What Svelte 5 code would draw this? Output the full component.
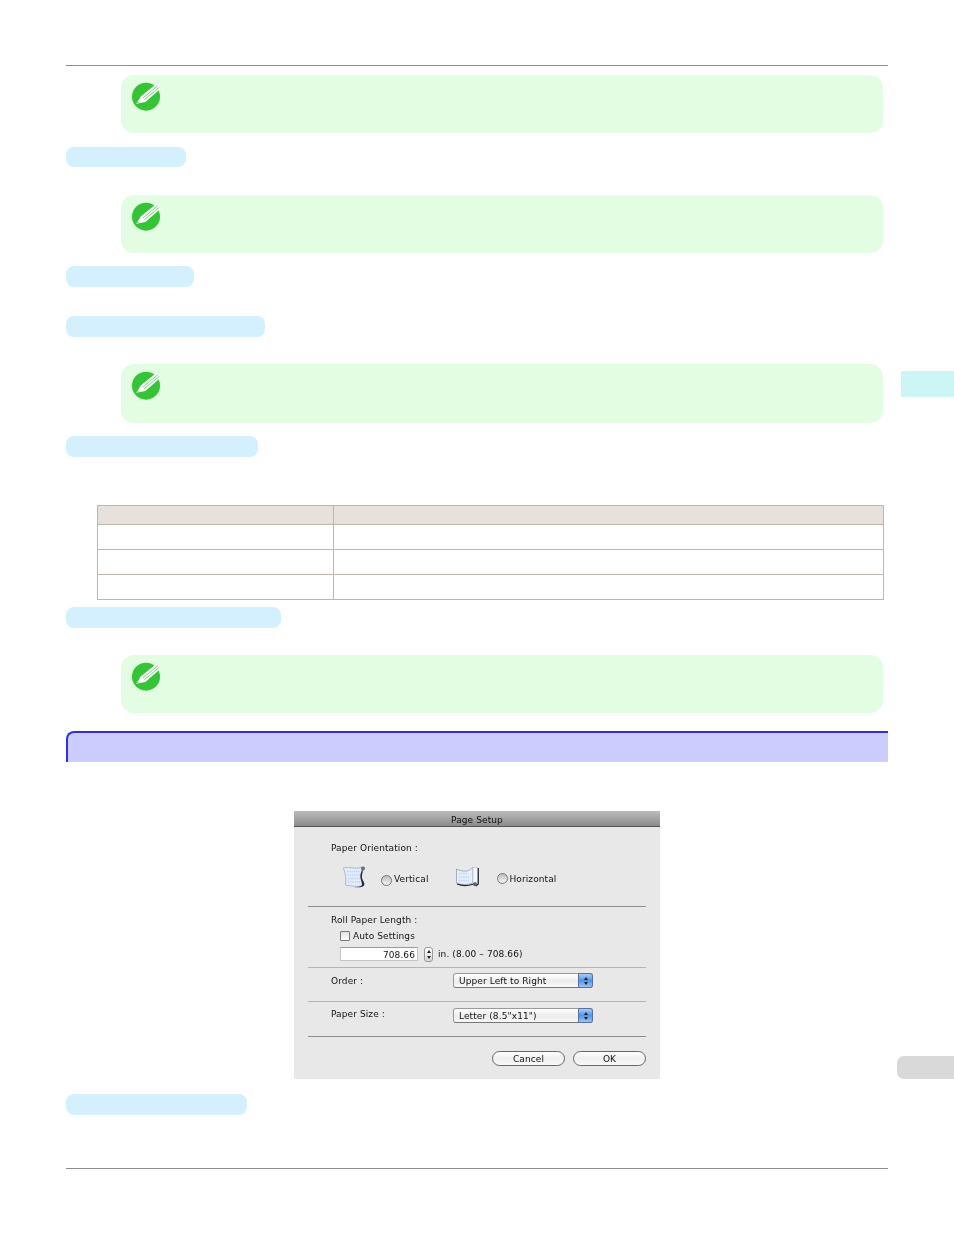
<script>
  const tableRows = [0, 1, 2];
</script>

{#snippet noteIcon()}
  <svg class="note-icon" viewBox="0 0 33 32" width="33" height="32" aria-hidden="true">
    <circle cx="16" cy="15.7" r="14" fill="#35c435" />
    <path d="M6.2 22.8 L11 15.2 L26.7 2.6 L31 7.2 L15.4 21 Z" fill="#fff" />
    <path d="M13 17 L28 4.6 M14.4 18.7 L29.4 6.2" stroke="#35c435" stroke-width="0.7" fill="none" />
    <path d="M6.2 22.8 L7.8 20.4 L9.2 21.6 Z" fill="#7fd97f" />
  </svg>
{/snippet}

{#snippet note()}
  <div class="note">{@render noteIcon()}</div>
{/snippet}

<div class="page">
  <div class="rule"></div>
  <div class="content">
    {@render note()}
    <div class="pill p1"></div>
    <div class="note-slot n2">{@render note()}</div>
    <div class="pill p2"></div>
    <div class="pill p3"></div>
    <div class="note-slot n3">{@render note()}</div>
    <div class="pill p4"></div>

    <div class="table">
      <div class="cell head"></div>
      <div class="cell head last"></div>
      {#each tableRows as r}
        <div class="cell"></div>
        <div class="cell last"></div>
      {/each}
    </div>

    <div class="pill p5"></div>
    <div class="note-slot n4">{@render note()}</div>

    <div class="heading"></div>

    <div class="dialog">
      <div class="titlebar">Page Setup</div>
      <div class="dlg-body">
        <div class="label first">Paper Orientation :</div>
        <div class="orient">
          <svg class="paper" viewBox="0 0 24 25" width="24" height="25" aria-hidden="true">
            <path d="M1.3 3 C6 1 14 5 20 2 L20 6 C19 10 19 14 21 18 L21 21 C15 22 9 21 3.5 20 C4.5 14 3.5 8 1.3 3 Z" fill="#e2ecfd" stroke="#9aa3b5" stroke-width="0.7" />
            <path d="M5 6.5 H18 M5.5 10 H18 M6 13.5 H18 M6 17 H19" stroke="#bcd0f6" stroke-width="1.3" stroke-dasharray="1.2 1" />
            <path d="M20.5 3.5 C21.5 6 19.5 10 20 13 C20.5 16 23.5 18 22 20.5 C20.5 22.5 15 22.5 12 22 C16 22 20 21.5 20 19.5 C20 17 18.2 14 18.3 11 C18.4 8 20 6 20.5 3.5 Z" fill="#20263a" />
            <circle cx="21" cy="3.4" r="2" fill="#666e82" />
          </svg>
          <span class="radio r1"></span>
          <span class="opt">Vertical</span>
          <svg class="paper p-h" viewBox="0 0 24 25" width="24" height="25" aria-hidden="true">
            <path d="M0.5 4 C5 6.5 10 6.5 12.5 5.5 C14 5 15.5 3.5 17 2.5 L17 18 C11 20 5 20 0.5 18 Z" fill="#e4eefd" stroke="#8a93a8" stroke-width="0.7" />
            <path d="M3 8.5 H12 M3 12 H14 M3 15.5 H14" stroke="#bcd0f6" stroke-width="1.3" stroke-dasharray="1.2 1" />
            <path d="M17 2.5 L21.5 2.5 L21.5 18 L17 18 Z" fill="#f6f8fd" stroke="#a8b0c0" stroke-width="0.5" />
            <path d="M22.3 3 L22.3 19 L20 21 M1 19 C6 21 12 20.8 17 19.2" fill="none" stroke="#20263a" stroke-width="1.2" />
            <circle cx="19" cy="19.3" r="2" fill="#596176" />
          </svg>
          <span class="radio r2"></span>
          <span class="opt">Horizontal</span>
        </div>
        <div class="sep s1"></div>
        <div class="label roll">Roll Paper Length :</div>
        <div class="auto"><span class="check"></span>Auto Settings</div>
        <div class="length">
          <span class="input">708.66</span>
          <span class="stepper"><i class="up"></i><i class="down"></i></span>
          <span class="range">in. (8.00 – 708.66)</span>
        </div>
        <div class="sep s2"></div>
        <div class="select-row r-order">
          <span class="label">Order :</span>
          <span class="select">Upper Left to Right<span class="arrows"><i class="aup"></i><i class="adown"></i></span></span>
        </div>
        <div class="sep s3"></div>
        <div class="select-row r-size">
          <span class="label">Paper Size :</span>
          <span class="select">Letter (8.5"x11")<span class="arrows"><i class="aup"></i><i class="adown"></i></span></span>
        </div>
        <div class="sep s4"></div>
        <div class="buttons">
          <span class="btn">Cancel</span>
          <span class="btn">OK</span>
        </div>
      </div>
    </div>

    <div class="pill p6"></div>
  </div>
  <div class="rule bottom"></div>

  <div class="tab-cyan"></div>
  <div class="tab-gray"></div>
</div>

<style>
  :global(body) {
    margin: 0;
    background: #fff;
  }

  .page {
    position: relative;
    width: 954px;
    height: 1235px;
    overflow: hidden;
    padding-top: 65px;
    box-sizing: border-box;
  }

  .rule {
    height: 1px;
    margin-left: 66px;
    width: 822px;
    background: #8c8c8c;
  }
  .rule.bottom {
    margin-top: 53px;
  }

  .content {
    padding: 9px 0 0 66px;
    width: 822px;
  }

  .note {
    width: 762px;
    height: 58px;
    margin-left: 55px;
    background: #e3fde3;
    border-radius: 13px;
    padding: 6px 0 0 9px;
    box-sizing: border-box;
  }
  .note-icon { display: block; }

  .note-slot.n2 { margin-top: 28px; }
  .note-slot.n3 { margin-top: 27px; }
  .note-slot.n3 .note { height: 59px; }
  .note-slot.n4 { margin-top: 27px; }

  .pill {
    background: #d4f0ff;
    border-radius: 8px;
    height: 20px;
  }
  .p1 { width: 120px; margin-top: 14px; }
  .p2 { width: 128px; margin-top: 13px; height: 21px; }
  .p3 { width: 199px; margin-top: 29px; height: 21px; }
  .p4 { width: 192px; margin-top: 13px; height: 21px; }
  .p5 { width: 215px; margin-top: 7px; height: 21px; }
  .p6 { width: 181px; margin-top: 15px; height: 21px; }

  .table {
    display: grid;
    grid-template-columns: 236px 550px;
    grid-template-rows: 19px repeat(3, 25px);
    width: 787px;
    margin: 48px 0 0 31px;
    border-top: 1px solid #bfb5ae;
    border-left: 1px solid #bfb5ae;
    box-sizing: border-box;
  }
  .cell {
    border-bottom: 1px solid #bfb5ae;
    border-right: 1px solid #bfb5ae;
  }
  .cell.head { background: #e8e0da; }

  .heading {
    margin-top: 18px;
    width: 822px;
    height: 31px;
    box-sizing: border-box;
    background: #ccccff;
    border-top: 2px solid #3030e0;
    border-left: 2px solid #3030e0;
    border-top-left-radius: 8px;
  }

  .dialog {
    width: 366px;
    height: 268px;
    margin: 49px 0 0 228px;
    background: #e8e8e8;
    font-family: "DejaVu Sans", "Liberation Sans", sans-serif;
    font-size: 9px;
    letter-spacing: 0.1px;
    color: #111;
    filter: blur(0.3px);
  }

  .titlebar {
    height: 16px;
    box-sizing: border-box;
    line-height: 16px;
    padding-top: 1px;
    text-align: center;
    background: linear-gradient(#bcbcbc, #8c8c8c);
    border-bottom: 1px solid #555;
  }

  .dlg-body {
    padding: 0 14px;
  }

  .label { display: block; padding-left: 23px; line-height: 12px; }
  .label.first { padding-top: 15px; }

  .orient {
    display: flex;
    align-items: flex-start;
    height: 41px;
    margin-top: 11px;
    padding-left: 34px;
  }
  .paper { flex: none; }
  .paper.p-h { margin-left: 27px; }
  .radio {
    flex: none;
    width: 9px;
    height: 9px;
    margin: 9px 2px 0 15px;
    border: 1px solid #777;
    border-radius: 50%;
    background: linear-gradient(#bdbdbd, #f6f6f6);
  }
  .radio.r1 { margin-top: 10px; }
  .radio.r2 { margin: 8px 2px 0 17px; }
  .opt { line-height: 12px; margin-top: 8px; }

  .sep { height: 1px; background: #8e8e8e; }
  .sep.s2, .sep.s3 { background: #b4b4b4; }

  .label.roll { padding-top: 7px; }

  .auto {
    display: flex;
    align-items: center;
    margin: 4px 0 0 32px;
    line-height: 12px;
  }
  .check {
    width: 8px;
    height: 8px;
    margin-right: 3px;
    border: 1px solid #777;
    border-radius: 1px;
    background: linear-gradient(#e2e2e2, #fff);
  }

  .length {
    display: flex;
    align-items: center;
    height: 16px;
    margin: 4px 0 5px 32px;
  }
  .input {
    width: 78px;
    height: 14px;
    padding-right: 2px;
    box-sizing: border-box;
    line-height: 14px;
    text-align: right;
    background: #fff;
    border: 1px solid #c4c4c4;
    border-top-color: #999;
  }
  .stepper {
    display: flex;
    flex-direction: column;
    align-items: center;
    justify-content: center;
    gap: 3px;
    width: 9px;
    height: 15px;
    margin-left: 6px;
    background: linear-gradient(#fff, #d8d8d8);
    border: 1px solid #999;
    border-radius: 3px;
    box-sizing: border-box;
  }
  .up, .aup {
    width: 0;
    height: 0;
    border: 2px solid transparent;
    border-top: 0;
    border-bottom: 3px solid #222;
  }
  .down, .adown {
    width: 0;
    height: 0;
    border: 2px solid transparent;
    border-bottom: 0;
    border-top: 3px solid #222;
  }
  .range { margin-left: 5px; }

  .select-row {
    display: flex;
    align-items: flex-start;
    height: 33px;
    box-sizing: border-box;
    padding-top: 5px;
  }
  .select-row .label { width: 122px; flex: none; margin-top: 2px; }
  .r-size { height: 34px; padding-top: 6px; }
  .r-size .label { margin-top: 0; }
  .select {
    position: relative;
    width: 140px;
    height: 15px;
    padding-left: 5px;
    box-sizing: border-box;
    line-height: 14px;
    background: linear-gradient(#fff, #ececec 55%, #f8f8f8);
    border: 1px solid #9a9a9a;
    border-bottom-color: #777;
    border-radius: 3px;
  }
  .arrows {
    position: absolute;
    right: -1px;
    top: -1px;
    width: 15px;
    height: 15px;
    box-sizing: border-box;
    display: flex;
    flex-direction: column;
    align-items: center;
    justify-content: center;
    gap: 2px;
    background: linear-gradient(#a9cdf5, #4f94e6 50%, #9cc6f4);
    border: 1px solid #5a6f9c;
    border-radius: 0 3px 3px 0;
  }

  .buttons {
    display: flex;
    justify-content: flex-end;
    gap: 8px;
    margin-top: 14px;
  }
  .btn {
    width: 73px;
    height: 15px;
    box-sizing: border-box;
    line-height: 14px;
    text-align: center;
    background: linear-gradient(#fff, #efefef 50%, #fafafa);
    border: 1px solid #666;
    border-radius: 8px;
  }

  .tab-cyan {
    position: absolute;
    right: 0;
    top: 371px;
    width: 53px;
    height: 26px;
    background: #ccf5f5;
  }
  .tab-gray {
    position: absolute;
    right: 0;
    top: 1056px;
    width: 57px;
    height: 23px;
    background: #d9d9d9;
    border-radius: 7px 0 0 7px;
  }
</style>
